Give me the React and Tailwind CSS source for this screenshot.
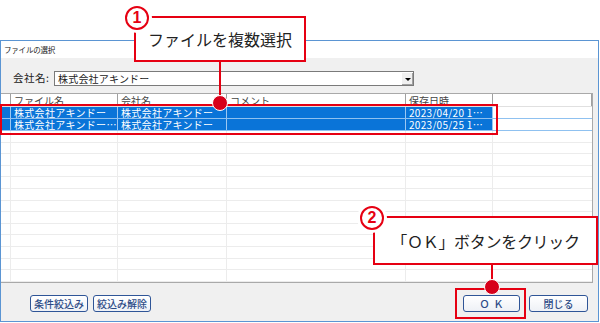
import React from "react";

const RED = "border-[#e60012]";
const widths = ["w-[10px]", "w-[107px]", "w-[109px]", "w-[179px]", "w-[87px]"];

function SelRow({ c1, c2, date }) {
  const cells = ["", c1, c2, "", date];
  return (
    <div className="flex h-[12px] border-b border-[#8fc1f0]">
      {cells.map((t, i) => (
        <div
          key={i}
          className={`${widths[i]} shrink-0 bg-[#0a74d8] border-r border-[#9cc8f2] text-white text-[10px] leading-[11px] pl-[3px] overflow-hidden whitespace-nowrap tracking-[0.3px]`}
        >
          {t}
        </div>
      ))}
      <div className="flex-1 bg-white" />
    </div>
  );
}

function EmptyRow() {
  return (
    <div className="flex flex-1 border-b border-[#ececec]">
      {widths.map((w, i) => (
        <div key={i} className={`${w} shrink-0 border-r border-[#ececec]`} />
      ))}
      <div className="flex-1" />
    </div>
  );
}

function Btn({ children, className = "" }) {
  return (
    <div
      className={`h-[17px] flex items-center justify-center rounded-[3px] border-[1.5px] border-[#2f5597] bg-gradient-to-b from-white to-[#eef1f6] text-[#2b4a86] text-[10px] font-medium ${className}`}
    >
      {children}
    </div>
  );
}

function Circle({ n, className }) {
  return (
    <div
      className={`absolute w-[24px] h-[24px] rounded-full border-2 ${RED} bg-white shadow-[0_0_0_3px_white] flex items-center justify-center text-[#e60012] text-[16px] font-bold leading-none ${className}`}
      style={{ fontFamily: "'Liberation Sans', Arial, sans-serif" }}
    >
      {n}
    </div>
  );
}

export default function App() {
  const emptyRows = Array.from({ length: 13 });
  return (
    <div
      className="relative w-[600px] h-[323px] bg-white overflow-hidden text-[#222]"
      style={{ fontFamily: "'Noto Sans CJK JP', 'Noto Sans', sans-serif" }}
    >
      {/* Window */}
      <div className="mt-[40px] w-[599px] h-[282px] border border-[#5b95d3] flex flex-col">
        <div className="h-[17px] bg-white flex items-center pl-[3px] text-[7.5px] text-[#222] tracking-[-0.2px]">
          ファイルの選択
        </div>
        <div className="flex-1 bg-[#f0f0f0] flex flex-col">
          {/* company row */}
          <div className="flex items-center h-[15px] mt-[13px]">
            <div className="w-[53px] pl-[12px] text-[10.5px] leading-none tracking-[0.5px]">会社名:</div>
            <div className="w-[360px] h-[15px] bg-white border border-[#7a7a7a] flex items-center">
              <div className="flex-1 pl-[3px] text-[10px] leading-none tracking-[0.2px]">株式会社アキンドー</div>
              <div className="w-[12px] h-[13px] bg-[#f0f0f0] border-l border-t border-white shadow-[inset_-1px_-1px_0_#a0a0a0] flex items-center justify-center">
                <div className="w-0 h-0 border-l-[3px] border-r-[3px] border-t-[3px] border-l-transparent border-r-transparent border-t-black" />
              </div>
            </div>
          </div>
          {/* table */}
          <div className="mt-[7px] w-[592px] h-[190px] bg-white border-t border-r border-b border-[#a9a9a9] flex flex-col">
            <div className="flex h-[13px] shrink-0 bg-white border-b border-[#e0e0e0]">
              {["", "ファイル名", "会社名", "コメント", "保存日時"].map((t, i) => (
                <div
                  key={i}
                  className={`${widths[i]} shrink-0 border-r border-[#a0a0a0] text-[10px] leading-[13px] pl-[3px] text-[#444] overflow-hidden whitespace-nowrap`}
                >
                  {t}
                </div>
              ))}
              <div className="flex-1 border-r border-[#a0a0a0]" />
            </div>
            <SelRow c1="株式会社アキンドー" c2="株式会社アキンドー" date="2023/04/20 1…" />
            <SelRow c1="株式会社アキンドー…" c2="株式会社アキンドー" date="2023/05/25 1…" />
            <div className="flex-1 flex flex-col">
              {emptyRows.map((_, i) => (
                <EmptyRow key={i} />
              ))}
            </div>
          </div>
          {/* buttons */}
          <div className="flex items-center mt-[12px] pl-[29px] pr-[10px]">
            <Btn className="w-[58px]">条件絞込み</Btn>
            <Btn className="w-[58px] ml-[5px]">絞込み解除</Btn>
            <div className="flex-1" />
            <Btn className="w-[57px] tracking-[4px] pl-[4px]">ＯＫ</Btn>
            <Btn className="w-[59px] ml-[9px]">閉じる</Btn>
          </div>
        </div>
      </div>

      {/* selection frame */}
      <div className={`absolute left-0 top-[104px] w-[498px] h-[31px] border-2 ${RED}`} />
      {/* OK frame */}
      <div className={`absolute left-[455px] top-[288px] w-[71px] h-[31px] border-2 ${RED}`} />

      {/* callout 1 */}
      <div className={`absolute left-[134px] top-[16px] w-[172px] h-[46px] border-2 ${RED} bg-white flex items-center justify-center text-[16px] leading-none text-[#222]`}>
        ファイルを複数選択
      </div>
      <Circle n="1" className="left-[125px] top-[6px]" />
      <div className="absolute left-[219px] top-[61px] w-[2px] h-[36px] bg-[#e60012]" />
      <div className="absolute left-[212px] top-[95px] w-[16px] h-[16px] rounded-full bg-[#d7001a] border border-white" />

      {/* callout 2 */}
      <div className={`absolute left-[373px] top-[216px] w-[225px] h-[49px] border-2 ${RED} bg-white flex items-center justify-center text-[16px] leading-none text-[#222] tracking-[-0.3px]`}>
        「ＯＫ」ボタンをクリック
      </div>
      <Circle n="2" className="left-[360px] top-[206px]" />
      <div className="absolute left-[491px] top-[264px] w-[2px] h-[18px] bg-[#e60012]" />
      <div className="absolute left-[484px] top-[279px] w-[16px] h-[16px] rounded-full bg-[#d7001a] border border-white" />
    </div>
  );
}
